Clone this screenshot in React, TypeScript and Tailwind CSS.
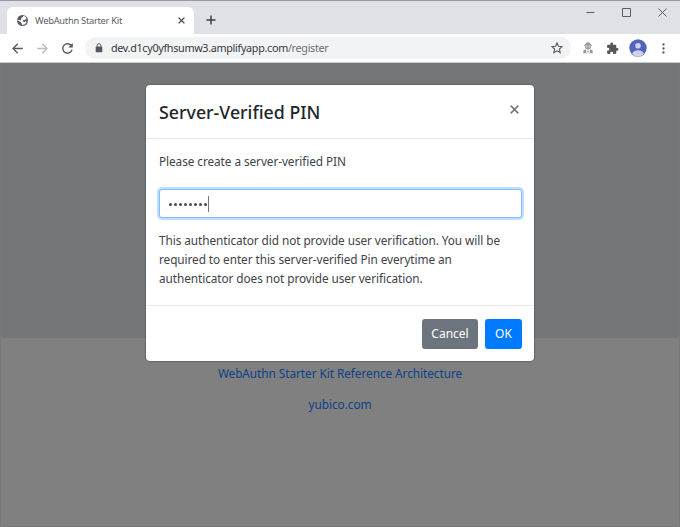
import React from 'react';

function TabStrip() {
  return (
    <div className="flex h-[34px] shrink-0 items-end border-t border-[#96999d] bg-[#dee1e6]">
      <div className="flex h-[27px] w-[187px] ml-[7px] items-center rounded-t-[6px] bg-white pl-[10px] pr-[9px]">
        <svg className="h-[11px] w-[11px] shrink-0" viewBox="0 0 22 22">
          <circle cx="11" cy="11" r="11" fill="#555a60" />
          <path d="M12 2l5 1 2 4-3 3-3 0-2 3 4 1 3-2 1 3-4 4-5 1-1-4-3-3-4-1-2-3 4 1 3 1 2-3-1-2 4-2z" fill="#fff" />
        </svg>
        <span className="ml-[7px] whitespace-nowrap text-[9.3px] tracking-[-0.26px] text-[#5a5e63]">WebAuthn Starter Kit</span>
        <svg className="ml-auto h-[7px] w-[7px]" viewBox="0 0 7 7" stroke="#3c4043" strokeWidth="1.3">
          <path d="M.6.6l5.8 5.8M6.4.6L.6 6.4" />
        </svg>
      </div>
      <svg className="mb-[9px] ml-[12px] h-[10px] w-[10px]" viewBox="0 0 10 10" stroke="#3c4043" strokeWidth="1.5">
        <path d="M5 .5v9M.5 5h9" />
      </svg>
      <div className="mb-[17px] ml-auto mr-[13px] flex items-center gap-[27px]">
        <svg className="h-[9px] w-[9px]" viewBox="0 0 9 9" fill="none" stroke="#5a5d61"><path d="M.5 4.5h8" /></svg>
        <svg className="h-[9px] w-[9px]" viewBox="0 0 9 9" fill="none" stroke="#5a5d61"><path d="M.5.5h8v8h-8z" /></svg>
        <svg className="h-[9px] w-[9px]" viewBox="0 0 9 9" fill="none" stroke="#5a5d61"><path d="M.5.5l8 8M8.5.5l-8 8" /></svg>
      </div>
    </div>
  );
}

function Toolbar() {
  return (
    <div className="flex h-[29px] shrink-0 items-center border-b border-[#c9cacc] bg-white pl-[12px] pr-[15px]">
      <svg className="h-[11px] w-[11px]" viewBox="0 0 11 11" fill="none" stroke="#54585d" strokeWidth="1.3">
        <path d="M10.7 5.5H1M5.7.8L1 5.5l4.7 4.7" />
      </svg>
      <svg className="ml-[14px] h-[11px] w-[11px]" viewBox="0 0 11 11" fill="none" stroke="#b9bbbe" strokeWidth="1.3">
        <path d="M.3 5.5H10M5.3.8L10 5.5l-4.7 4.7" />
      </svg>
      <svg className="ml-[14px] h-[11px] w-[11px]" viewBox="0 0 11 11" fill="none" stroke="#54585d" strokeWidth="1.35">
        <path d="M9.3 2.6A4.7 4.7 0 1 0 10.1 6.6" />
        <path d="M10.8 0v4.6H6.2z" fill="#54585d" stroke="none" />
      </svg>
      <div className="ml-[12px] flex h-[22px] w-[486px] items-center rounded-full bg-[#f1f3f4] pl-[10px] pr-[8px]">
        <svg className="h-[10px] w-[8px] shrink-0" viewBox="0 0 8 10">
          <rect x=".7" y="3.6" width="6.6" height="5.7" rx=".8" fill="#54585d" />
          <path d="M2.1 4V2.6a1.9 1.9 0 0 1 3.8 0V4" fill="none" stroke="#54585d" />
        </svg>
        <span className="ml-[8px] whitespace-nowrap text-[10.8px] tracking-[-0.32px] text-[#6b6f74]">
          <span className="text-[#36393e]">dev.d1cy0yfhsumw3.amplifyapp.com</span>/register
        </span>
        <svg className="ml-auto h-[12px] w-[12px]" viewBox="0 0 12 12" fill="none" stroke="#54585d" strokeWidth="1.1">
          <path d="M6 .9l1.5 3.3 3.6.4-2.7 2.4.8 3.6L6 8.8l-3.2 1.8.8-3.6L.9 4.6l3.6-.4z" />
        </svg>
      </div>
      <svg className="ml-[12px] h-[12px] w-[10px]" viewBox="0 0 10 12" fill="#96989b">
        <path d="M2.7 2L3.2.5h3.6L7.3 2l1.7.9v.8H1v-.8z" />
        <path fillRule="evenodd" d="M2 4.2h6v1.4L7 7.1H3L2 5.6zM3.2 4.8v.8h1v-.8zM5.8 4.8v.8h1v-.8z" />
        <path d="M.3 11.3V8.4l2-1 1.4 1.4-.8 1 .9 1.5zM9.7 11.3V8.4l-2-1-1.4 1.4.8 1-.9 1.5zM3.7 7.4h2.6L5 8.7zM4.3 9.3h1.4v1.2H4.3z" />
      </svg>
      <svg className="ml-[13px] h-[13px] w-[13px]" viewBox="0 0 24 24" fill="#54585d">
        <path d="M20.5 11H19V7c0-1.1-.9-2-2-2h-4V3.5a2.5 2.5 0 0 0-5 0V5H4c-1.1 0-2 .9-2 2v3.8h1.5a2.7 2.7 0 0 1 0 5.4H2V20c0 1.1.9 2 2 2h3.8v-1.500a2.700 2.700 0 0 1 5.400 0V22H17c1.100 0 2-.9 2-2v-4h1.500a2.500 2.500 0 0 0 0-5z" />
      </svg>
      <svg className="ml-[10px] h-[18px] w-[18px]" viewBox="0 0 18 18">
        <circle cx="9" cy="9" r="8.7" fill="#5364bd" />
        <circle cx="9" cy="6.7" r="2.8" fill="#cdd2ec" />
        <path d="M3.100 14.700C4.200 12.100 6.800 11.300 9 11.300s4.800.8 5.900 3.400C13.500 16.500 11.400 17.600 9 17.600s-4.500-1.100-5.900-2.900z" fill="#cdd2ec" />
      </svg>
      <svg className="ml-auto h-[11px] w-[3px]" viewBox="0 0 3 11" fill="#54585d">
        <circle cx="1.5" cy="1.5" r="1.15" /><circle cx="1.5" cy="5.5" r="1.15" /><circle cx="1.5" cy="9.5" r="1.15" />
      </svg>
    </div>
  );
}

function PinDialog() {
  return (
    <div className="absolute left-[145px] top-[22px] flex h-[276px] w-[388px] flex-col rounded-[4px] bg-white text-[#3e4348] shadow-[0_0_1px_1px_#626466]">
      <div className="flex h-[54px] shrink-0 items-start justify-between border-b border-[#e6e8ea] px-[13px]">
        <h1 className="mt-[15px] whitespace-nowrap text-[17.8px] leading-[24px] font-medium text-[#212529]">Server-Verified PIN</h1>
        <button className="mr-[2px] mt-[20px]" aria-label="Close">
          <svg className="h-[9px] w-[9px]" viewBox="0 0 8 8" stroke="#7b7b7b" strokeWidth="1.5">
            <path d="M.6.6l6.8 6.8M7.4.6L.6 7.4" />
          </svg>
        </button>
      </div>
      <div className="h-[166px] px-[13px] pt-[13px] text-[11.8px] leading-[19px] tracking-[-0.07px]">
        <p className="whitespace-nowrap">Please create a server-verified PIN</p>
        <div className="-mr-[1px] mt-[18px] flex h-[29px] items-center rounded-[3px] border border-[#80bdff] bg-white pl-[9px] shadow-[0_0_0_2px_#bfdeff]">
          <div className="flex gap-[2px]">
            {Array.from({ length: 8 }, (_, i) => (
              <span key={i} className="mt-[2px] h-[3px] w-[3px] rounded-full bg-[#454b52]" />
            ))}
          </div>
          <span className="ml-[1px] h-[16px] w-px bg-[#777]" />
        </div>
        <p className="mt-[13px] whitespace-nowrap">
          This authenticator did not provide user verification. You will be<br />
          required to enter this server-verified Pin everytime an<br />
          authenticator does not provide user verification.
        </p>
      </div>
      <div className="flex flex-1 justify-end gap-[7px] border-t border-[#e6e8ea] pr-[12px] pt-[13px] text-[12px] text-white">
        <button className="h-[30px] w-[56px] rounded-[3px] bg-[#6c757d]">Cancel</button>
        <button className="h-[30px] w-[37px] rounded-[3px] bg-[#007bff]">OK</button>
      </div>
    </div>
  );
}

export default function App() {
  return (
    <div className="flex h-[527px] w-[680px] flex-col overflow-hidden font-['Noto_Sans','Open_Sans',sans-serif]">
      <TabStrip />
      <Toolbar />
      <main className="relative flex-1 border-x border-b border-[#777879] bg-[#808080]">
        <div className="h-[275px] rounded-b-[3px] bg-[#747678]" />
        <div className="flex flex-col items-center gap-[12px] pt-[26px] text-[11.8px] leading-[19px] tracking-[-0.05px] text-[#0c4287]">
          <a>WebAuthn Starter Kit Reference Architecture</a>
          <a>yubico.com</a>
        </div>
        <PinDialog />
      </main>
    </div>
  );
}
